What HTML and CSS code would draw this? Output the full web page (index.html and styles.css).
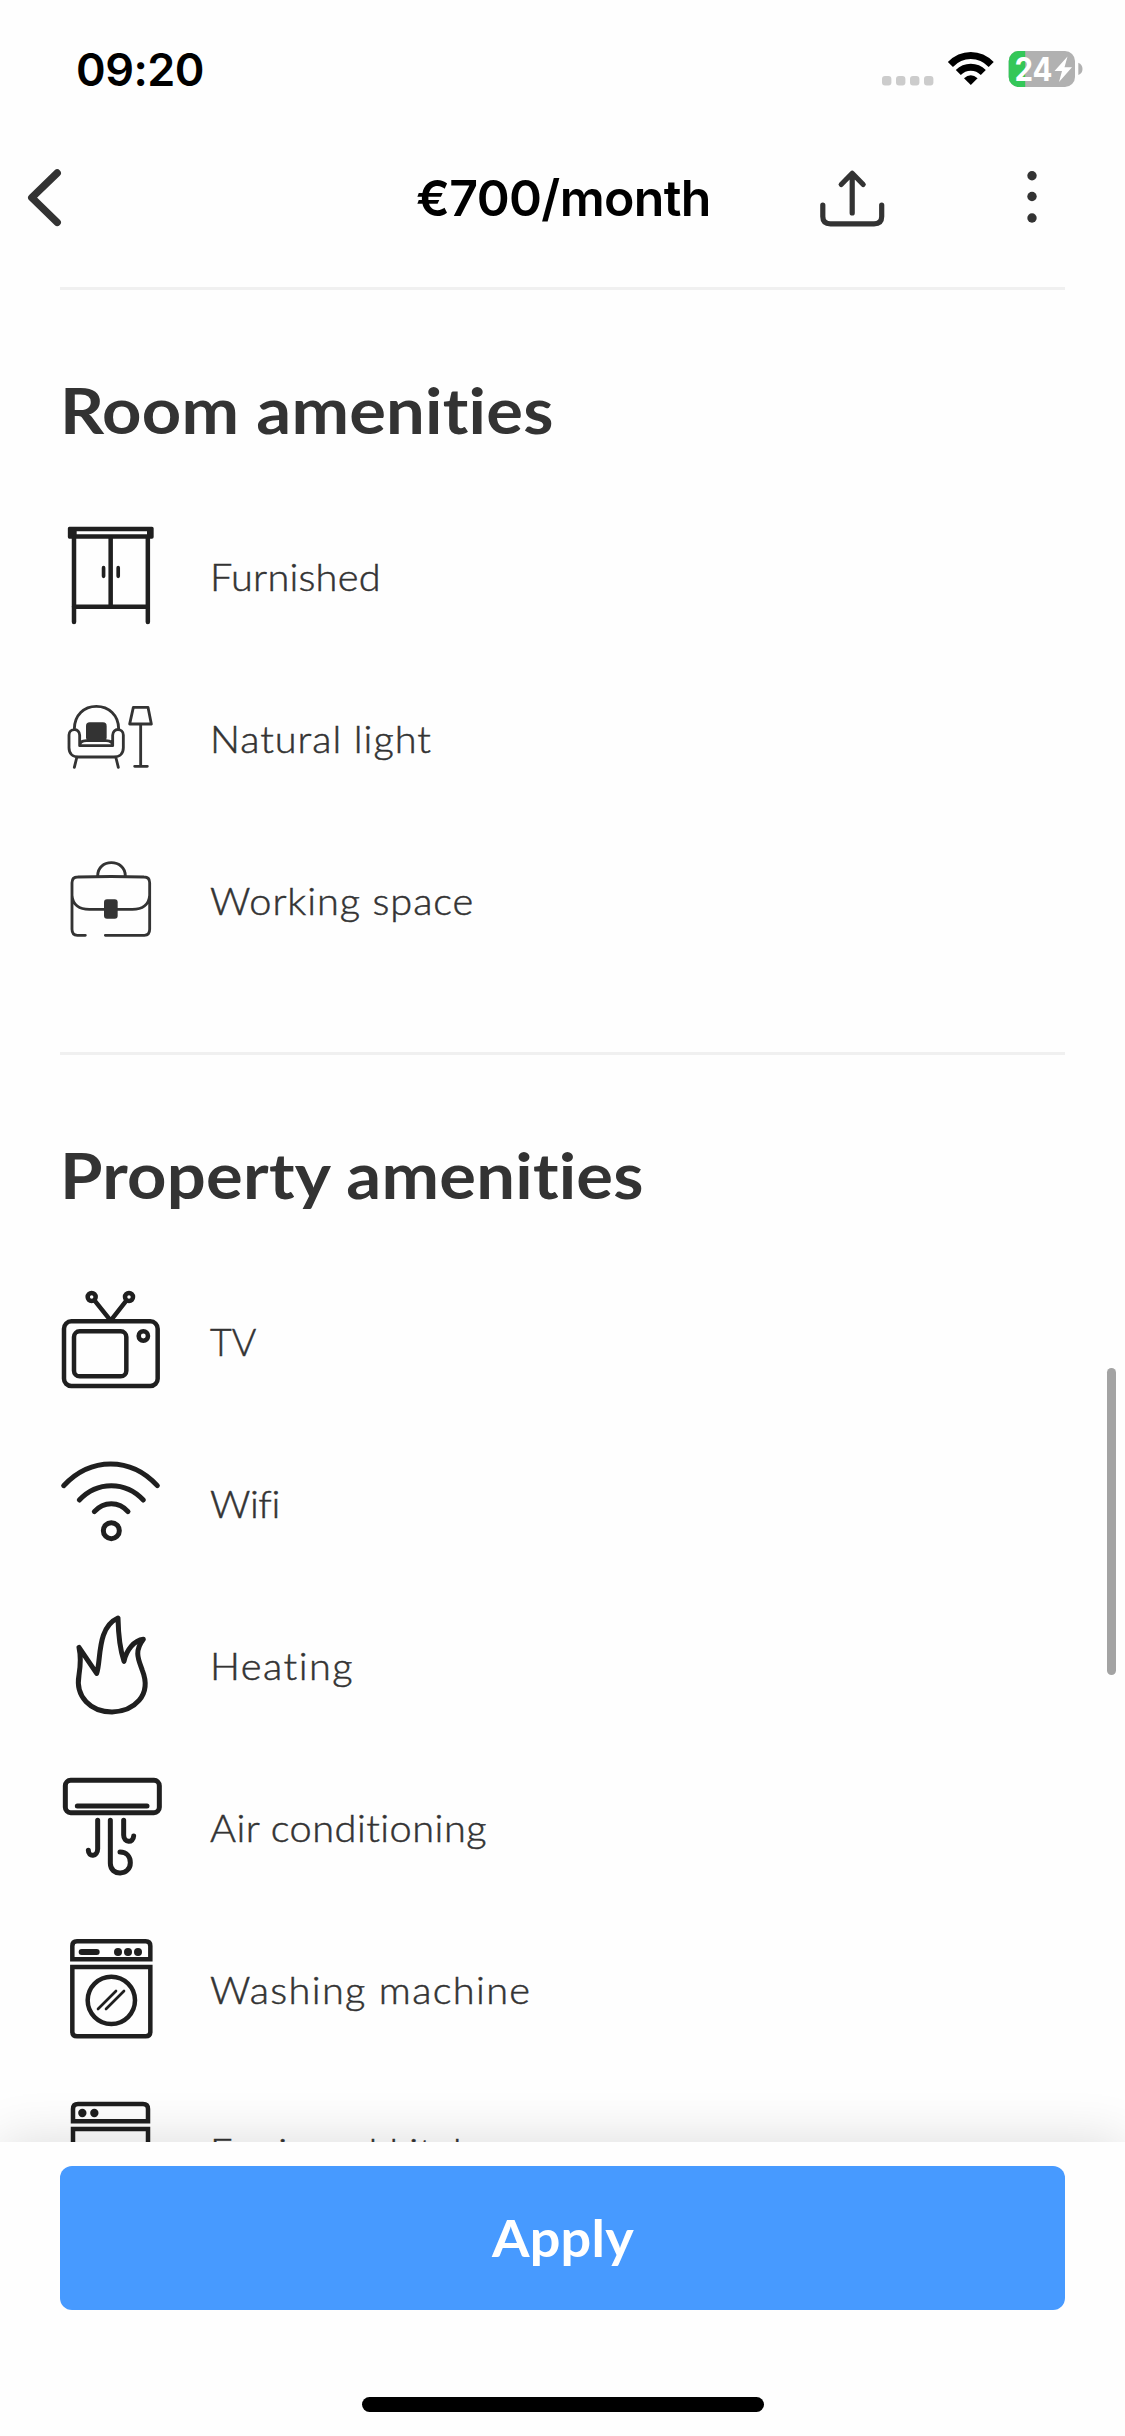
FILE: index.html
```html
<!DOCTYPE html>
<html lang="en">
<head>
<meta charset="utf-8">
<title>Room details</title>
<link rel="stylesheet" href="styles.css">
</head>
<body>
<div class="screen">
  <header class="top">
    <div class="status">
      <span class="time">09:20</span>
      <svg class="status-icons" width="205" height="40" viewBox="880 50 205 40">
        <g fill="#ccc"><rect x="882" y="76" width="9.4" height="9.4" rx="3"/><rect x="896" y="76" width="9.4" height="9.4" rx="3"/><rect x="910" y="76" width="9.4" height="9.4" rx="3"/><rect x="924" y="76" width="9.4" height="9.4" rx="3"/></g>
        <g fill="none" stroke="#000" stroke-width="7"><path d="M950.4 64.5Q959 55.500 970.8 55.500T991.2 64.5"/><path d="M958.3 72.500Q963.5 67.200 970.8 67.200T983.3 72.500"/></g>
        <path d="M970.8 85L964 78.300Q970.8 72 977.6 78.300Z"/>
        <clipPath id="bat"><rect x="1008.7" y="51" width="66.3" height="36" rx="10"/></clipPath>
        <g clip-path="url(#bat)"><rect x="1008" y="51" width="68" height="36" fill="#b1b1b1"/><rect x="1008" y="51" width="17.2" height="36" fill="#34c759"/></g>
        <path d="M1078.3 62.700Q1082.5 64.500 1082.5 69T1078.3 75Z" fill="#b1b1b1"/>
        <text class="battery" x="1014.5" y="81" textLength="38" lengthAdjust="spacingAndGlyphs">24</text>
        <path d="M1067.500 56.500L1054.500 71H1062L1059 82L1072 67.200H1064.500Z" fill="#fff"/>
      </svg>
    </div>
    <nav class="nav">
      <svg class="back" width="60" height="70" viewBox="20 162 60 70" fill="none" stroke="#333" stroke-width="7.4" stroke-linecap="round" stroke-linejoin="round"><path d="M57.2 173L31.8 197.700L57.2 222.400"/></svg>
      <h1 class="price">€700/month</h1>
      <svg class="actions" width="225" height="70" viewBox="815 162 225 70" fill="none" stroke="#333" stroke-width="5.2" stroke-linecap="round" stroke-linejoin="round"><path d="M822.8 205V216.500Q822.8 223.800 830.5 223.800H874Q881.7 223.800 881.7 216.500V205M852.2 213V173.500M841.2 184.500L852.2 173.300L863.2 184.500"/><g fill="#333" stroke="none"><circle cx="1032" cy="175.7" r="4.7"/><circle cx="1032" cy="196.5" r="4.7"/><circle cx="1032" cy="218" r="4.7"/></g></svg>
    </nav>
  </header>

  <main class="content">
    <section class="section">
      <h2 class="heading">Room amenities</h2>
      <ul class="list">
        <li class="row"><svg class="icon" viewBox="60 405 306 486"><path d="M88 500H336Q341 500 341 505V531Q341 536 336 536H88Q83.5 536 83.5 531V505Q83.5 500 88 500ZM110 514V523H321V514Z" fill="#1f1f1f" fill-rule="evenodd" stroke="none"/><path d="M102 534V786M323.5 534V786"/><path d="M212 534V740M102 740H323"/><path class="stroke-11" d="M190.700 623V649M234.600 623V649"/></svg><span class="label furnished">Furnished</span></li>
        <li class="row"><svg class="icon thin" viewBox="60 -69 306 486"><path d="M103 147C103 105 132 79 169 79S236 105 236 147M119 197V166C119 142 87 144 87 165V203C87 221 98 231 116 231H221C239 231 250 221 250 203V165C250 144 218 142 218 166V197H119C119 187 126 182 139 182H198C211 182 218 187 218 197M110 234L103 262M228 234L235 262M280 82H324L334 132H269ZM302 134V258M284 259H322"/><rect x="138" y="127" width="62" height="56" rx="11" fill="#333" stroke="none"/></svg><span class="label light">Natural light</span></li>
        <li class="row"><svg class="icon thin" viewBox="60 417 306 486"><path d="M136 766H112Q96 766 96 748V608Q96 591 113 591Q213 588 312 591Q329 591 329 608V748Q329 766 313 766H196M96 646C98 674 118 688 148 688H277C307 688 327 674 329 646M173 588C173 562 192 548 214 548S256 562 256 588"/><rect x="192" y="658" width="41" height="58" rx="9" fill="#333" stroke="none"/></svg><span class="label working">Working space</span></li>
      </ul>
    </section>
    <section class="section">
      <h2 class="heading">Property amenities</h2>
      <ul class="list">
        <li class="row"><svg class="icon" viewBox="60 -30 306 486"><rect x="72" y="154" width="281" height="194" rx="22"/><rect x="102" y="184" width="157" height="135" rx="17"/><circle cx="310" cy="198" r="14"/><circle cx="155" cy="81" r="12"/><circle cx="267" cy="81" r="12"/><path d="M164 92L212 152L259 92"/></svg><span class="label tv">TV</span></li>
        <li class="row"><svg class="icon bold" viewBox="60 456 306 486"><path d="M71 647Q132 582 212 582T352 647M118 690Q158 647 214 647T310 690M163 725Q184 701 214 701T264 725"/><circle cx="214" cy="782" r="24"/></svg><span class="label wifi">Wifi</span></li>
        <li class="row"><svg class="icon bold" viewBox="60 -18 306 486"><path d="M117 172L170 250C184 214 169 113 234 84C235 134 238 172 252 214C259 180 283 151 310 148C282 185 295 207 307 241C337 317 281 364 216 366C153 366 105 321 117 255C122 224 123 199 117 172Z"/></svg><span class="label heating">Heating</span></li>
        <li class="row"><svg class="icon bold" viewBox="60 468 306 486"><rect x="76" y="571" width="282" height="97" rx="16"/><path d="M112 648H321M173 691V776C173 801 145 802 145 781M211 691V820C211 860 271 858 271 818C271 800 260 786 240 786M251 691V735C251 759 280 760 281 738"/></svg><span class="label air">Air conditioning</span></li>
        <li class="row"><svg class="icon" viewBox="60 24 306 486"><path d="M97 178V138Q97 124 111 124H317Q331 124 331 138V178ZM97 201H331V395Q331 409 317 409H111Q97 409 97 395Z" stroke-linejoin="miter"/><circle cx="214" cy="301" r="71"/><path class="stroke-18" d="M125 156H170"/><g fill="#1f1f1f" stroke="none"><circle cx="234" cy="156" r="12"/><circle cx="264" cy="156" r="12"/><circle cx="294" cy="156" r="12"/></g><path class="stroke-8" d="M174 327L228 273M198 327L252 273"/></svg><span class="label washing">Washing machine</span></li>
        <li class="row"><svg class="icon" viewBox="60 510 306 486"><path d="M99 664V627Q99 612 114 612H309Q324 612 324 627V664ZM99 687H324V882Q324 897 309 897H114Q99 897 99 882Z" stroke-linejoin="miter"/><g fill="#1f1f1f" stroke="none"><circle cx="127" cy="639" r="12.5"/><circle cx="163" cy="639" r="12.5"/></g></svg><span class="label kitchen">Equipped kitchen</span></li>
      </ul>
    </section>
    <div class="scrollbar"></div>
  </main>

  <footer class="footer">
    <button class="apply"><span class="apply-text">Apply</span></button>
    <div class="home"></div>
  </footer>
</div>
</body>
</html>
```
FILE: styles.css
```css
* { box-sizing: border-box; }
body { margin: 0; background: #fff; }
.screen { width: 1125px; height: 2436px; display: flex; flex-direction: column; overflow: hidden; background: #fefefe; color: #333; font-family: Lato, sans-serif; font-variant-ligatures: none; }
.top { flex: none; height: 287px; font-family: Inter, sans-serif; color: #000; }
.status { height: 140px; padding: 49px 40px 0 76px; display: flex; justify-content: space-between; align-items: flex-start; }
.time { font-size: 45px; line-height: 41px; font-weight: 600; letter-spacing: -0.5px; }
.status-icons { margin-top: 1px; }
.battery { font: 700 33px Inter, sans-serif; fill: #fff; }
.nav { height: 147px; padding: 22px 85px 0 20px; display: grid; grid-template-columns: 60px 1fr 225px; align-items: start; }
.price { margin: 0; padding-left: 336px; font-size: 50px; line-height: 72px; font-weight: 600; letter-spacing: -0.65px; white-space: nowrap; }
.content { position: relative; flex: none; height: 1855px; overflow: hidden; padding: 0 60px; }
.section { height: 765px; border-top: 3px solid #f0f0f0; }
.heading { margin: 0; height: 205px; padding-top: 80px; font-size: 62.5px; line-height: 80px; font-weight: 700; letter-spacing: 0.2px; white-space: nowrap; transform: scaleX(1.1); transform-origin: 0 0; }
.list { margin: 0; padding: 0; list-style: none; }
.row { height: 162px; display: flex; align-items: flex-start; gap: 48px; }
.icon { flex: none; width: 102px; height: 162px; fill: none; stroke: #1f1f1f; stroke-width: 13.5px; stroke-linecap: round; stroke-linejoin: round; }
.thin { stroke: #333; stroke-width: 8.5px; }
.bold { stroke-width: 15px; }
.stroke-18 { stroke-width: 18px; }
.stroke-11 { stroke-width: 11px; }
.stroke-8 { stroke-width: 8px; }
.label { padding-top: 57px; font-size: 37.5px; line-height: 50px; font-weight: 300; white-space: nowrap; -webkit-text-stroke: 0.5px #333; transform: scaleX(1.06); transform-origin: 0 0; }
.furnished { letter-spacing: 0.2px; }
.light { letter-spacing: 0.9px; }
.working { letter-spacing: 0.85px; }
.tv { transform: none; }
.wifi { letter-spacing: -0.4px; }
.heating { letter-spacing: 1.4px; }
.air { letter-spacing: 0.45px; }
.washing { letter-spacing: 1.25px; }
.kitchen { letter-spacing: 0.8px; }
.scrollbar { position: absolute; right: 9px; top: 1081px; width: 9px; height: 307px; border-radius: 5px; background: #a3a3a3; }
.footer { position: relative; flex: none; height: 294px; padding-top: 24px; display: flex; flex-direction: column; align-items: center; gap: 87px; background: #fefefe; box-shadow: 0 0 50px rgba(0,0,0,.14); }
.apply { width: 1005px; height: 144px; padding: 0; border: 0; border-radius: 12px; background: #479aff; color: #fff; font-family: inherit; font-weight: 700; font-size: 51px; line-height: 142px; }
.apply-text { display: inline-block; letter-spacing: 0.2px; transform: scaleX(1.06); }
.home { width: 402px; height: 15px; border-radius: 8px; background: #000; }
```
